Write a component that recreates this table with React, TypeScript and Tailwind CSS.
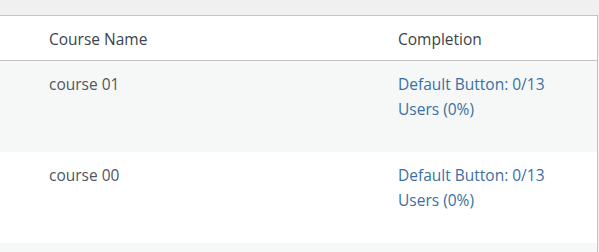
export default function App() {
  const rows = [
    { name: "course 01", striped: true },
    { name: "course 00", striped: false },
  ];
  return (
    <div
      className="w-[599px] h-[252px] overflow-hidden bg-[#f0f0f1] pt-[15px]"
      style={{ fontFamily: '"Open Sans", "Noto Sans", sans-serif' }}
    >
      <div className="w-[598px] border-t border-r border-[#c3c4c7] bg-white">
        {/* header */}
        <div className="flex h-[45px] border-b border-[#c3c4c7] text-[15.5px] leading-[24px] text-[#3c434a]">
          <div className="w-[36px] shrink-0" />
          <div className="w-[349px] shrink-0 px-[13px] pt-[11px]">Course Name</div>
          <div className="flex-1 px-[13px] pt-[11px]">Completion</div>
        </div>
        {rows.map((r) => (
          <div
            key={r.name}
            className={`flex h-[91px] text-[15.5px] leading-[24.5px] ${r.striped ? "bg-[#f6f7f7]" : "bg-white"}`}
          >
            <div className="w-[36px] shrink-0" />
            <div className="w-[349px] shrink-0 px-[13px] pt-[11px] text-[#50575e]">{r.name}</div>
            <div className="flex-1 px-[13px] pt-[11px]">
              <a href="#" className="text-[#3a70a3]">
                Default Button: 0/13
                <br />
                Users (0%)
              </a>
            </div>
          </div>
        ))}
        <div className="h-[20px] bg-[#f6f7f7]" />
      </div>
    </div>
  );
}
